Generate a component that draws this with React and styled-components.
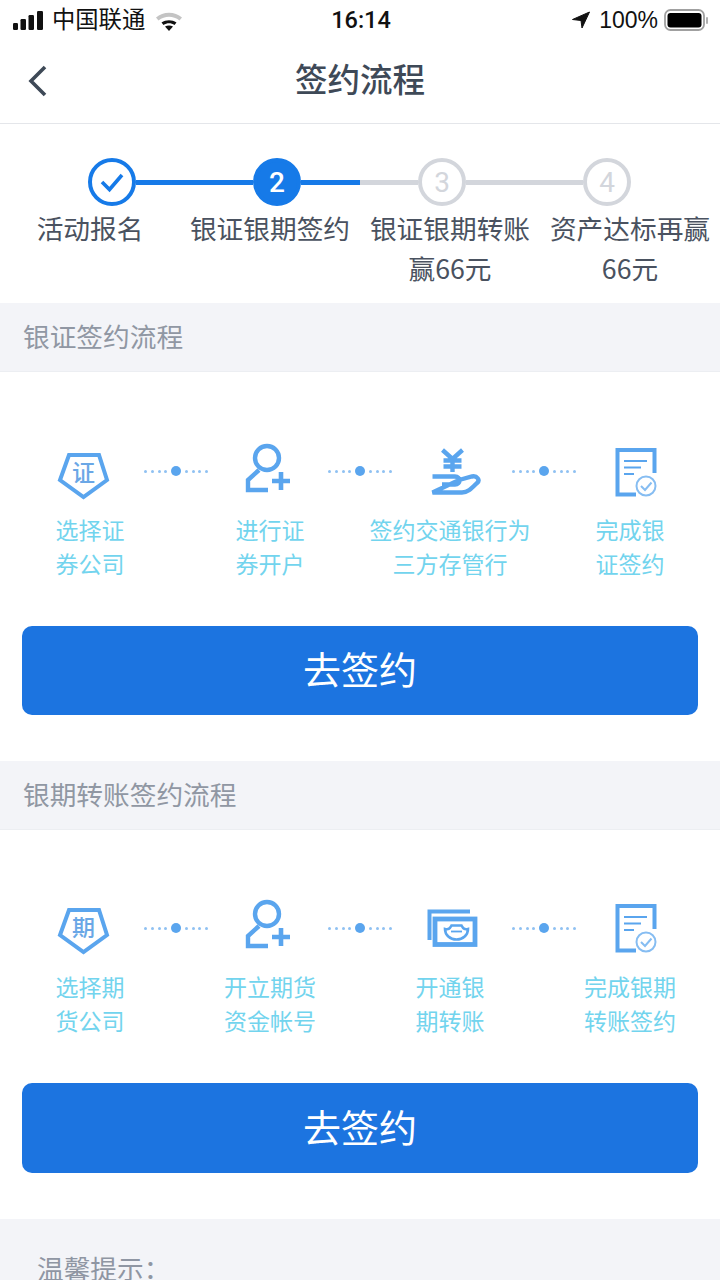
import { Fragment } from "react"
import styled, { createGlobalStyle } from "styled-components"

const GlobalStyle = createGlobalStyle`
  html, body {
    margin: 0;
    background: #fff;
    font-family: "Noto Sans CJK SC", "Liberation Sans", sans-serif;
  }
  * { box-sizing: border-box; }
`

const BLUE = "#5aa5ee"

const Page = styled.div`
  width: 720px;
  height: 1280px;
  overflow: hidden;
  background: #fff;
`

const StatusBar = styled.div`
  height: 40px;
  display: grid;
  grid-template-columns: 1fr auto 1fr;
  align-items: center;
  padding: 0 11px 0 13px;
  color: #111;
`

const StatusSide = styled.div`
  display: flex;
  align-items: center;
  justify-content: ${p => (p.$right ? "flex-end" : "flex-start")};
  gap: 8px;
`

const Carrier = styled.span`
  font-size: 23.3px;
  line-height: 36px;
  margin: 0 2px 4px 0;
`

const Clock = styled.span`
  font-family: Roboto, "Liberation Sans", sans-serif;
  font-size: 23.5px;
  font-weight: 500;
`

const Percent = styled.span`
  font-family: "Liberation Sans", sans-serif;
  font-size: 23px;
  margin-right: -2px;
`

const NavBar = styled.div`
  height: 84px;
  display: flex;
  align-items: center;
  justify-content: center;
  position: relative;
  border-bottom: 1px solid #e4e6ea;
`

const BackIcon = styled.svg`
  position: absolute;
  left: 26px;
  top: 24px;
`

const Title = styled.h1`
  margin: 0 0 8px;
  font-size: 32.5px;
  font-weight: 500;
  color: #3e4957;
`

const Steps = styled.div`
  padding: 34px 0 15px;
`

const Track = styled.div`
  display: flex;
  align-items: center;
  padding-left: 88px;
`

const Circle = styled.div`
  width: 48px;
  height: 48px;
  flex: none;
  border-radius: 50%;
  display: flex;
  align-items: center;
  justify-content: center;
  font-family: Roboto, "Liberation Sans", sans-serif;
  font-size: 28px;
  font-weight: ${p => (p.$state === "todo" ? 400 : 500)};
  color: ${p => (p.$state === "todo" ? "#d3d6dc" : "#fff")};
  background: ${p => (p.$state === "now" ? "#167ae8" : "#fff")};
  border: 4px solid ${p => (p.$state === "todo" ? "#d3d6dc" : "#167ae8")};
`

const Line = styled.div`
  width: 117px;
  height: 5px;
  flex: none;
  background: ${p => p.$fill};
`

const StepLabels = styled.div`
  display: grid;
  grid-template-columns: repeat(4, 180px);
  margin-top: 2px;
`

const StepLabel = styled.div`
  font-size: 26.7px;
  line-height: 40px;
  text-align: center;
  white-space: pre-line;
  color: #4a5260;
`

const SectionHead = styled.div`
  height: 69px;
  padding: 0 0 3px 23px;
  display: flex;
  align-items: center;
  background: #f3f4f8;
  border-bottom: 1px solid #eceef2;
  font-size: 26.7px;
  color: #9097a3;
`

const Flow = styled.div`
  padding: ${p => p.$top}px 22px 46px;
`

const IconRow = styled.div`
  height: 60px;
  display: flex;
  align-items: center;
  margin: 0 0 0 2px;
`

const IconCell = styled.div`
  width: 120px;
  height: 60px;
  flex: none;
  display: flex;
  justify-content: center;
  margin-bottom: ${p => (p.$lift || 0) * 2}px;
`

const Connector = styled.div`
  width: 64px;
  flex: none;
  display: flex;
  align-items: center;
  justify-content: space-between;
`

const Dot = styled.i`
  width: 3px;
  height: 3px;
  border-radius: 50%;
  background: #8fc1f2;
`

const BigDot = styled.i`
  width: 10px;
  height: 10px;
  border-radius: 50%;
  background: ${BLUE};
`

const FlowLabels = styled.div`
  display: grid;
  grid-template-columns: repeat(4, 180px);
  margin: 11px -22px 46px;
`

const FlowLabel = styled.div`
  font-size: 23px;
  line-height: 34px;
  text-align: center;
  white-space: pre-line;
  color: #72d4ee;
`

const SignButton = styled.button`
  display: block;
  width: 100%;
  height: ${p => p.$height}px;
  padding: 0 0 6px;
  border: 0;
  border-radius: 10px;
  background: #1c74e0;
  color: #fff;
  font-family: inherit;
  font-size: 38px;
`

const Tips = styled.div`
  height: 61px;
  padding: 30px 0 0 37px;
  background: #f3f4f8;
  font-size: 26.7px;
  line-height: 38px;
  color: #8f96a3;
`

const Badge = ({ text }) => (
  <svg width="60" height="60" viewBox="0 0 60 60">
    <path d="M15 14H45L53 39L29.5 56L6 39Z" fill="none" stroke={BLUE} strokeWidth="4" strokeLinejoin="miter" />
    <text x="29.5" y="40" textAnchor="middle" fontSize="23" fontWeight="500" fill="#6aa7e6" fontFamily="'Noto Sans CJK SC', sans-serif">{text}</text>
  </svg>
)

const PersonIcon = () => (
  <svg width="60" height="60" viewBox="0 0 60 60" fill="none" stroke={BLUE} strokeWidth="4.4">
    <circle cx="29" cy="17" r="12" />
    <path d="M21 29L10 39V49H30" />
    <path d="M34 40H52M43 31V49" strokeWidth="4.6" />
  </svg>
)

const HandIcon = () => (
  <svg width="60" height="60" viewBox="0 0 60 60" fill="none" stroke={BLUE} strokeWidth="4.4">
    <path d="M20.5 9L30.5 18L40.5 9M21.5 19.5H39.5M21.5 25.5H39.5M30.5 18V31" />
    <path d="M10.5 35.5H33C39 35.5 39 43.5 33 43.5H20M37 39L50 35.5C55 34.5 58.5 39 55 42C50 47 46 51.5 40 51.5H10.5Z" />
  </svg>
)

const DocIcon = () => (
  <svg width="60" height="60" viewBox="0 0 60 60" fill="none" stroke={BLUE}>
    <path d="M48.5 32V9H11.5V53.5H30" strokeWidth="4" />
    <path d="M18 20H41M18 26.5H35M18 33H28" strokeWidth="2" />
    <circle cx="40" cy="45" r="9.5" strokeWidth="2" stroke="#86bdf2" />
    <path d="M35 45L39 49L45.5 41.5" strokeWidth="2" stroke="#86bdf2" />
  </svg>
)

const CardIcon = () => (
  <svg width="60" height="60" viewBox="0 0 60 60" fill="none" stroke={BLUE}>
    <path d="M7.5 42V13.5H48" strokeWidth="4" />
    <rect x="13" y="21" width="40" height="25.5" strokeWidth="4.8" />
    <path d="M23 31C27 32 28 30 29.5 27.5H39.5C41 30 42 32 46 31C46 37 41 41.5 34.5 41.5C28 41.5 23 37 23 31Z" strokeWidth="2.6" />
    <path d="M29 33.5H40" strokeWidth="1.8" />
  </svg>
)

const Dots = () => (
  <Connector>
    <Dot /><Dot /><Dot /><Dot />
    <BigDot />
    <Dot /><Dot /><Dot /><Dot />
  </Connector>
)

const SECTIONS = [
  {
    head: "银证签约流程",
    top: 69,
    buttonHeight: 89,
    icons: [
      { node: <Badge text="证" /> },
      { node: <PersonIcon /> },
      { node: <HandIcon /> },
      { node: <DocIcon /> },
    ],
    labels: ["选择证\n券公司", "进行证\n券开户", "签约交通银行为\n三方存管行", "完成银\n证签约"],
  },
  {
    head: "银期转账签约流程",
    top: 68,
    buttonHeight: 90,
    icons: [
      { node: <Badge text="期" />, lift: 2 },
      { node: <PersonIcon />, lift: 1 },
      { node: <CardIcon /> },
      { node: <DocIcon />, lift: 1 },
    ],
    labels: ["选择期\n货公司", "开立期货\n资金帐号", "开通银\n期转账", "完成银期\n转账签约"],
  },
]

const STEP_NAMES = ["活动报名", "银证银期签约", "银证银期转账\n赢66元", "资产达标再赢\n66元"]

function App () {
  return (
    <Page>
      <GlobalStyle />
      <StatusBar>
        <StatusSide>
          <svg width="31" height="19" viewBox="0 0 31 19" fill="#111">
            <rect x="0" y="12" width="5" height="7" rx="1.2" />
            <rect x="7.5" y="8" width="5.5" height="11" rx="1.2" />
            <rect x="15.5" y="4" width="5.5" height="15" rx="1.2" />
            <rect x="24" y="0" width="6" height="19" rx="1.2" />
          </svg>
          <Carrier>中国联通</Carrier>
          <svg width="28" height="21" viewBox="0 0 28 21">
            <path d="M1 7.5C8 1 20 1 27 7.5L24.5 10.5C18 5.5 10 5.5 3.5 10.5Z" fill="#c4c4c4" />
            <path d="M6.5 12.5C11 9.5 17 9.5 21.5 12.5L19.5 15C16 12.8 12 12.8 8.5 15Z" fill="#111" />
            <path d="M10 16.5C12.5 15 15.5 15 18 16.5L14 21Z" fill="#111" />
          </svg>
        </StatusSide>
        <Clock>16:14</Clock>
        <StatusSide $right>
          <svg width="20" height="18" viewBox="0 0 20 18" fill="#111" stroke="#111" strokeWidth="1">
            <path d="M18.5 1L1.5 8.5L10 9.5L11 17Z" />
          </svg>
          <Percent>100%</Percent>
          <svg width="45" height="22" viewBox="0 0 45 22">
            <rect x="1" y="1" width="39" height="20" rx="5.5" fill="none" stroke="#a0a0a0" strokeWidth="1.8" />
            <rect x="3.5" y="4" width="34" height="14.5" rx="3" fill="#000" />
            <rect x="42" y="8" width="2" height="7" rx="1" fill="#b0b0b0" />
          </svg>
        </StatusSide>
      </StatusBar>

      <NavBar>
        <BackIcon width="24" height="34" viewBox="0 0 24 34" fill="none" stroke="#3e4957" strokeWidth="3.6">
          <path d="M19 3L5 17L19 31" />
        </BackIcon>
        <Title>签约流程</Title>
      </NavBar>

      <Steps>
        <Track>
          <Circle $state="done">
            <svg width="26" height="22" viewBox="0 0 26 22" fill="none" stroke="#167ae8" strokeWidth="3.6">
              <path d="M3 11L10.5 18.5L23 4" />
            </svg>
          </Circle>
          <Line $fill="#167ae8" />
          <Circle $state="now">2</Circle>
          <Line $fill="linear-gradient(90deg, #167ae8 59px, #d3d6dc 59px)" />
          <Circle $state="todo">3</Circle>
          <Line $fill="#d3d6dc" />
          <Circle $state="todo">4</Circle>
        </Track>
        <StepLabels>
          {STEP_NAMES.map(name => <StepLabel key={name}>{name}</StepLabel>)}
        </StepLabels>
      </Steps>

      {SECTIONS.map(section => (
        <section key={section.head}>
          <SectionHead>{section.head}</SectionHead>
          <Flow $top={section.top}>
            <IconRow>
              {section.icons.map((icon, i) => (
                <Fragment key={i}>
                  {i > 0 && <Dots />}
                  <IconCell $lift={icon.lift}>{icon.node}</IconCell>
                </Fragment>
              ))}
            </IconRow>
            <FlowLabels>
              {section.labels.map(label => <FlowLabel key={label}>{label}</FlowLabel>)}
            </FlowLabels>
            <SignButton $height={section.buttonHeight}>去签约</SignButton>
          </Flow>
        </section>
      ))}

      <Tips>温馨提示：</Tips>
    </Page>
  )
}

export default App
